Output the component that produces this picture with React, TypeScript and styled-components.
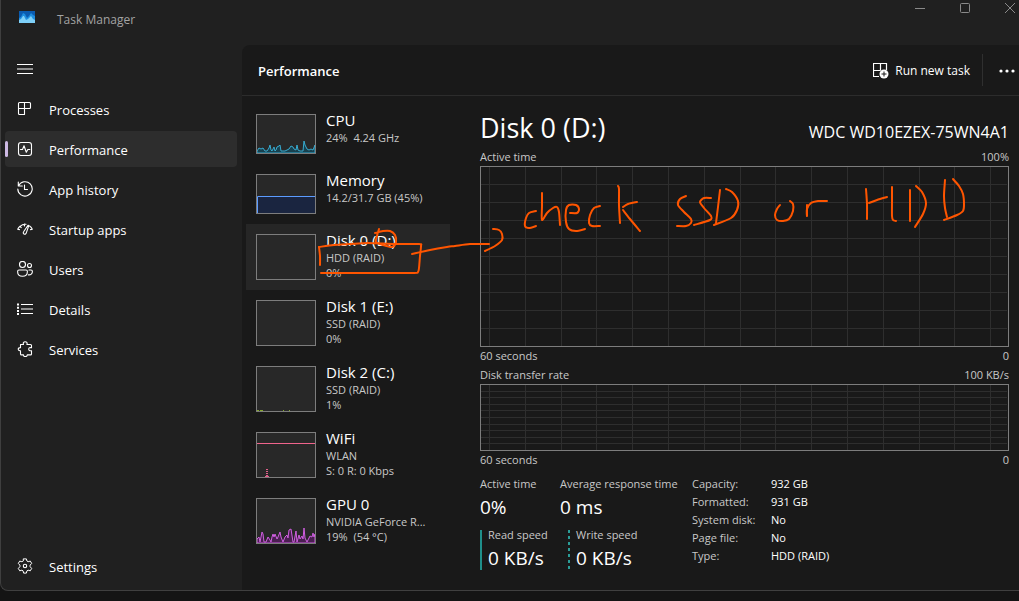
import React from "react";
import styled, { createGlobalStyle } from "styled-components";

const GlobalStyle = createGlobalStyle`
  * { box-sizing: border-box; }
  html, body { margin: 0; background: #141414; }
  body {
    font-family: "Open Sans", "Noto Sans", sans-serif;
    font-size: 11px;
    line-height: 16px;
    color: #fff;
    overflow-x: hidden;
  }
  button { font: inherit; color: inherit; background: none; border: 0; padding: 0; margin: 0; }
  a { color: inherit; text-decoration: none; }
  h1, h2, h3, p, ul { margin: 0; padding: 0; font-weight: 400; }
  ul { list-style: none; }
  svg { display: block; flex: none; }
`;

const Page = styled.div`
  min-height: 100vh;
  padding-bottom: 10px;
  display: flex;
  flex-direction: column;
`;

const Window = styled.div`
  position: relative;
  flex: 1;
  display: flex;
  flex-direction: column;
  background: #202020;
  border-left: 1px solid #3f3f3f;
  border-bottom: 1px solid #3f3f3f;
  border-bottom-left-radius: 8px;
  overflow: hidden;
`;

const TitleBar = styled.header`
  height: 45px;
  display: flex;
  align-items: flex-start;
  padding: 0 4px 0 18px;
`;

const AppIcon = styled.div`
  padding-top: 11px;
  width: 38px;
`;

const AppTitle = styled.h1`
  flex: 1;
  padding-top: 12px;
  font-size: 12px;
  line-height: 16px;
  color: #a3a3a3;
`;

const WindowControls = styled.div`
  display: flex;
  gap: 35px;
  padding-top: 3px;
  color: #8a8a8a;
`;

const Columns = styled.div`
  flex: 1;
  display: flex;
`;

const Sidebar = styled.nav`
  width: 241px;
  flex: none;
  display: flex;
  flex-direction: column;
  gap: 4px;
  padding: 6px 5px 6px 4px;
`;

const MenuButton = styled.button`
  width: 40px;
  height: 36px;
  padding-left: 12px;
`;

const NavLink = styled.a<{ $active?: boolean; $last?: boolean }>`
  position: relative;
  display: flex;
  align-items: center;
  gap: 16px;
  height: 36px;
  padding: 0 12px;
  margin-top: ${(p) => (p.$last ? "auto" : "0")};
  border-radius: 4px;
  background: ${(p) => (p.$active ? "#2d2d2d" : "transparent")};
  &::before {
    content: "";
    display: ${(p) => (p.$active ? "block" : "none")};
    position: absolute;
    left: 0;
    top: 10px;
    width: 3px;
    height: 16px;
    border-radius: 2px;
    background: #cdb9e3;
  }
`;

const NavLabel = styled.span`
  padding-top: 2px;
  font-size: 13px;
  line-height: 20px;
`;

const Main = styled.main`
  flex: 1;
  min-width: 0;
  display: flex;
  flex-direction: column;
  background: #191919;
  border-top-left-radius: 8px;
`;

const Toolbar = styled.div`
  height: 51px;
  display: flex;
  align-items: center;
  padding-left: 16px;
  border-bottom: 1px solid #2c2c2c;
`;

const ToolbarTitle = styled.h2`
  flex: 1;
  padding-top: 2px;
  font-size: 13px;
  line-height: 20px;
  font-weight: 600;
`;

const TaskButton = styled.button`
  display: flex;
  align-items: center;
  gap: 6px;
  padding: 2px 12px 0 0;
  font-size: 12px;
`;

const MoreButton = styled.button`
  height: 32px;
  width: 37px;
  padding: 2px 0 0 16px;
  border-left: 1px solid #2f2f2f;
`;

const Body = styled.div`
  flex: 1;
  display: flex;
`;

const DeviceList = styled.ul`
  width: 208px;
  flex: none;
  padding: 8px 0 0 4px;
`;

const DeviceButton = styled.button<{ $active?: boolean }>`
  width: 100%;
  display: flex;
  gap: 10px;
  text-align: left;
  padding: 0 10px;
  background: ${(p) => (p.$active ? "#262626" : "transparent")};
`;

const Thumb = styled.svg`
  margin: 10px 0;
  background: #282828;
  border: 1px solid #7d7d7d;
`;

const DeviceText = styled.div`
  padding-top: 7px;
  white-space: pre;
`;

const DeviceName = styled.div`
  font-size: 15px;
  line-height: 19px;
`;

const DeviceLine = styled.div`
  line-height: 15px;
  color: #c8c8c8;
`;

const Detail = styled.section`
  flex: 1;
  min-width: 0;
  padding: 12px 10px 0 30px;
`;

const Split = styled.div`
  display: flex;
  justify-content: space-between;
  align-items: baseline;
  color: #c8c8c8;
`;

const DetailHead = styled(Split)`
  color: #fff;
  padding-bottom: 1px;
`;

const DetailTitle = styled.h2`
  font-size: 27px;
  line-height: 40px;
`;

const Model = styled.p`
  font-size: 16px;
  line-height: 20px;
`;

const Chart = styled.svg`
  width: 100%;
  background: #191919;
  border: 1px solid #7d7d7d;
  margin: 1px 0;
`;

const TransferLabel = styled(Split)`
  padding-top: 3px;
`;

const Stats = styled.div`
  display: flex;
  gap: 12px;
  padding-top: 7px;
`;

const Readings = styled.div`
  display: grid;
  grid-template-columns: 80px 120px;
  align-content: start;
  row-gap: 11px;
`;

const Rates = styled.div`
  grid-column: 1 / -1;
  display: grid;
  grid-template-columns: 88px 112px;
`;

const Reading = styled.div`
  white-space: nowrap;
`;

const ReadingLabel = styled.div`
  color: #c8c8c8;
  line-height: 18px;
`;

const ReadingValue = styled.div`
  font-size: 19px;
  line-height: 24px;
  padding-top: 2px;
`;

const Rate = styled(Reading)<{ $dashed?: boolean }>`
  padding-left: 8px;
  background: ${(p) =>
    p.$dashed
      ? "repeating-linear-gradient(#2a9d98 0 3px, transparent 3px 6px)"
      : "linear-gradient(#1f8f8b, #1f8f8b)"};
  background-size: 2px 100%;
  background-repeat: no-repeat;
  ${ReadingLabel} { line-height: 10px; }
  ${ReadingValue} { padding-top: 6px; }
`;

const Facts = styled.table`
  border-collapse: collapse;
  align-self: flex-start;
  th, td {
    padding: 0;
    height: 18px;
    text-align: left;
    font-weight: 400;
    white-space: nowrap;
  }
  th { width: 79px; color: #c8c8c8; }
`;

const Ink = styled.svg`
  position: absolute;
  top: 0;
  left: 0;
  pointer-events: none;
`;

const Icon = ({ children }: { children: React.ReactNode }) => (
  <svg width="16" height="16" viewBox="0 0 16 16" fill="none" stroke="#fff" strokeWidth="1.1" strokeLinecap="round" strokeLinejoin="round" aria-hidden="true">
    {children}
  </svg>
);

const icons = {
  menu: <path d="M0 3.500h16M0 8h16M0 12.500h16" strokeWidth="1" strokeLinecap="butt" />,
  processes: <path d="M2.5 1.5h10a1 1 0 0 1 1 1v4a1 1 0 0 1-1 1h-11v-5a1 1 0 0 1 1-1zM7.5 1.5v12M1.5 7.5v5a1 1 0 0 0 1 1h5v-6" />,
  performance: (
    <>
      <rect x="1.5" y="1.5" width="13" height="13" rx="2.5" />
      <path d="M3.5 8.5h2L7 4.8l2.3 6.5 1.5-2.8h2" />
    </>
  ),
  history: (
    <>
      <path d="M1.3 1v4h4M1.5 4.8A7.2 7.2 0 1 1 .8 8" />
      <path d="M7.5 4v4.5h3" />
    </>
  ),
  startup: (
    <>
      <path d="M.7 8.2A8 8 0 0 1 3 5.3l1.2 1.4M3 5.3A8 8 0 0 1 9 3.2M12.6 5A8 8 0 0 1 15.3 8.2l-1.8.4M.7 8.2l1.8.4M7.5 3v2" />
      <path d="M11 4.2 6.6 10.8a1.5 1.5 0 1 0 2.6 1.4L11.8 4.6z" />
    </>
  ),
  users: (
    <>
      <circle cx="5.5" cy="3.5" r="3" />
      <circle cx="12.5" cy="4.5" r="2" />
      <path d="M2 9h7a1.4 1.4 0 0 1 1.4 1.4c0 3-2 4.9-4.9 4.9S.6 13.4.6 10.4A1.4 1.4 0 0 1 2 9z" />
      <path d="M12 9h2a1.4 1.4 0 0 1 1.4 1.4c0 2.4-1.6 3.7-4 3.5" />
    </>
  ),
  details: (
    <>
      <path d="M4 3.5h12M4 8h12M4 12.5h12" strokeLinecap="butt" />
      <path d="M1 2.5v11.5" strokeWidth="2" strokeDasharray="2 1.2" strokeLinecap="butt" />
    </>
  ),
  services: (
    <path d="M3.5 3.5h3c-.6-1.4.1-2.8 1.7-2.8s2.3 1.4 1.7 2.8h3.6a1 1 0 0 1 1 1v2.2c-1.7-.3-2.8.2-2.8 1.5s1.1 1.8 2.8 1.5v3.2a1 1 0 0 1-1 1h-3.200c-.1 1.300-.8 1.700-1.900 1.700s-1.900-.4-1.900-1.700h-2a1 1 0 0 1-1-1v-3C1.900 9.700 1.200 9.200 1.200 8.200s.7-1.600 2.300-1.600z" />
  ),
  settings: (
    <>
      <circle cx="8" cy="8" r="1.700" />
      <path d="M6.600.9h2.800l.5 2.100 1.200.7 2.200-.6 1.400 2.300-1.600 1.700v1.600l1.600 1.700-1.400 2.400-2.200-.6-1.200.7-.5 2.200H6.600l-.5-2.200-1.200-.7-2.200.6-1.400-2.400 1.600-1.700V7.100L1.300 5.400l1.400-2.300 2.200.6L6.100 3z" strokeWidth="1" />
    </>
  ),
};

const navItems: { label: string; icon: keyof typeof icons; active?: boolean }[] = [
  { label: "Processes", icon: "processes" },
  { label: "Performance", icon: "performance", active: true },
  { label: "App history", icon: "history" },
  { label: "Startup apps", icon: "startup" },
  { label: "Users", icon: "users" },
  { label: "Details", icon: "details" },
  { label: "Services", icon: "services" },
];

const cpuLine = "0,38 0,36 2,33 4,34 6,33 8,36 10,36 12,33 13,30 14,35 15,36 17,32 18,36 19,35 20,32 22,31 23,30 24,36 26,36 28,36 30,35 32,34 34,31 36,32 37,34 39,35 40,30 41,35 43,36 46,36 47,26 48,30 50,34 52,35 54,34 56,35 58,30 58,38";
const gpuLine = "0,44 0,40 2,38 3,43 5,33 6,35 7,43 9,43 11,38 13,41 14,43 15,38 16,35 17,38 18,35 20,40 21,38 23,33 24,38 26,43 28,38 30,36 31,39 32,31 34,30 36,43 37,43 39,32 40,43 42,36 43,40 45,37 46,40 47,29 48,39 50,43 52,39 53,37 55,38 56,34 57,38 58,35 58,44";

const devices: { name: string; lines: string[]; active?: boolean; graph?: React.ReactNode }[] = [
  {
    name: "CPU",
    lines: ["24%  4.24 GHz"],
    graph: <polygon points={cpuLine} fill="#17414f" stroke="#38abd0" />,
  },
  {
    name: "Memory",
    lines: ["14.2/31.7 GB (45%)"],
    graph: (
      <>
        <rect y="22" width="58" height="16" fill="#1a2540" />
        <path d="M0.5 38V21.500H58" fill="none" stroke="#5b9bff" />
      </>
    ),
  },
  { name: "Disk 0 (D:)", lines: ["HDD (RAID)", "0%"], active: true },
  { name: "Disk 1 (E:)", lines: ["SSD (RAID)", "0%"] },
  {
    name: "Disk 2 (C:)",
    lines: ["SSD (RAID)", "1%"],
    graph: <path d="M0 43.500h2M3 43.500h3M26 43.500h1M32 43.500h1" stroke="#83a52c" />,
  },
  {
    name: "WiFi",
    lines: ["WLAN", "S: 0 R: 0 Kbps"],
    graph: (
      <>
        <path d="M0 10.500h58" stroke="#f0648c" />
        <path d="M10 36v8" stroke="#e0608a" strokeWidth="2" strokeDasharray="1 1" />
        <path d="M8 43.500h4" stroke="#e0608a" />
      </>
    ),
  },
  {
    name: "GPU 0",
    lines: ["NVIDIA GeForce R...", "19%  (54 °C)"],
    graph: <polygon points={gpuLine} fill="#4b1f52" stroke="#cf5fe0" />,
  },
];

const facts = [
  ["Capacity:", "932 GB"],
  ["Formatted:", "931 GB"],
  ["System disk:", "No"],
  ["Page file:", "No"],
  ["Type:", "HDD (RAID)"],
];

const GridChart = ({ height, step, label }: { height: number; step: number; label: string }) => {
  const columns = Array.from({ length: 15 }, (_, i) => Math.round(8 + i * 35.8));
  const rows = Array.from({ length: 9 }, (_, i) => Math.round((i + 1) * step) - 1);
  return (
    <Chart height={height} viewBox={`0 0 527 ${height - 2}`} preserveAspectRatio="none" role="img" aria-label={label}>
      <g stroke="#2e2e2e" strokeWidth="1" shapeRendering="crispEdges">
        {columns.map((x) => (
          <line key={x} x1={x + 0.5} x2={x + 0.5} y1="0" y2={height} vectorEffect="non-scaling-stroke" />
        ))}
        {rows.map((y) => (
          <line key={y} x1="0" x2="526" y1={y + 0.5} y2={y + 0.5} />
        ))}
      </g>
    </Chart>
  );
};

type Point = [number, number];

// Pen strokes of the handwritten note, as the points the pen passed through.
const penStrokes: Point[][] = [
  [[379, 229], [377, 236], [376, 242], [383, 245], [392, 247], [396, 242], [395, 235], [390, 231], [383, 231], [375, 233]],
  [[319, 247], [320, 256], [320, 265]],
  [[319, 247], [334, 245], [350, 244], [368, 243], [395, 244], [419, 244], [421, 246], [420, 256], [419, 268], [418, 272], [414, 273], [380, 273], [321, 273]],
  [[412, 254], [430, 250], [447, 247], [455, 246], [470, 244], [489, 244]],
  [[493, 229], [499, 230], [502, 234], [502, 240], [495, 246], [485, 251]],
  [[536, 211], [529, 213], [526, 218], [525, 226], [529, 228], [536, 226]],
  [[542, 193], [542, 206], [542, 220], [547, 213], [553, 208], [557, 207], [559, 212], [560, 225]],
  [[570, 213], [577, 213], [579, 209], [576, 205], [569, 205], [566, 210], [566, 222], [569, 229], [576, 231], [585, 229]],
  [[600, 206], [594, 208], [590, 215], [589, 223], [592, 226], [600, 226]],
  [[618, 186], [619, 189], [619, 205], [620, 223]],
  [[637, 202], [628, 204], [623, 207]],
  [[623, 210], [630, 219], [640, 231]],
  [[686, 196], [680, 199], [678, 205], [684, 212], [691, 219], [691, 223], [686, 226], [677, 226]],
  [[711, 198], [704, 198], [700, 202], [704, 208], [711, 216], [710, 220], [694, 225]],
  [[720, 190], [718, 207], [716, 223]],
  [[726, 189], [732, 192], [738, 201], [737, 210], [731, 218], [714, 225]],
  [[780, 205], [777, 209], [775, 215], [777, 220], [783, 221], [789, 219], [793, 211], [793, 204], [790, 201]],
  [[807, 205], [807, 216], [807, 209], [811, 203], [818, 201], [827, 201]],
  [[866, 189], [867, 204], [867, 219]],
  [[869, 203], [877, 200], [887, 197]],
  [[892, 187], [892, 202], [892, 216], [893, 220], [896, 221]],
  [[910, 190], [910, 205], [910, 221]],
  [[916, 186], [922, 192], [926, 203], [923, 214], [915, 227]],
  [[945, 180], [944, 196], [945, 208], [947, 217]],
  [[953, 179], [959, 186], [963, 194], [964, 205], [963, 211], [957, 215], [944, 220]],
];

// Joins the points with cubic segments that pass through each of them.
const smooth = (points: Point[]) =>
  points.slice(1).reduce((path, p2, i) => {
    const p1 = points[i];
    const p0 = points[i - 1] ?? p1;
    const p3 = points[i + 2] ?? p2;
    const c1 = [p1[0] + (p2[0] - p0[0]) / 7, p1[1] + (p2[1] - p0[1]) / 7];
    const c2 = [p2[0] - (p3[0] - p1[0]) / 7, p2[1] - (p3[1] - p1[1]) / 7];
    return `${path}C${c1} ${c2} ${p2}`;
  }, `M${points[0]}`);

export default function App() {
  return (
    <>
      <GlobalStyle />
      <Page>
        <Window>
          <TitleBar>
            <AppIcon>
              <svg width="16" height="12" viewBox="0 0 16 12" aria-hidden="true">
                <rect width="16" height="12" fill="#0a5bb0" />
                <path d="M0 7L2 6l2-4 2 1 2 4 2-2 2-3 2 2 2 1v7H0z" fill="#1f8fe0" />
                <path d="M0 9l2-1 2-3 1 0 2 4 2-1 3-3 2 3 2 1v3H0z" fill="#7ed0f8" />
              </svg>
            </AppIcon>
            <AppTitle>Task Manager</AppTitle>
            <WindowControls>
              <button aria-label="Minimize">
                <svg width="10" height="10" viewBox="0 0 10 10" stroke="currentColor"><path d="M0 5.500h10" /></svg>
              </button>
              <button aria-label="Maximize">
                <svg width="10" height="10" viewBox="0 0 10 10" fill="none" stroke="currentColor"><rect x=".5" y=".5" width="9" height="9" rx="1" /></svg>
              </button>
              <button aria-label="Close">
                <svg width="10" height="10" viewBox="0 0 10 10" stroke="currentColor"><path d="M0 0l10 10M10 0L0 10" /></svg>
              </button>
            </WindowControls>
          </TitleBar>
          <Columns>
            <Sidebar>
              <MenuButton aria-label="Open navigation"><Icon>{icons.menu}</Icon></MenuButton>
              {navItems.map((item) => (
                <NavLink key={item.label} href="#" $active={item.active}>
                  <Icon>{icons[item.icon]}</Icon>
                  <NavLabel>{item.label}</NavLabel>
                </NavLink>
              ))}
              <NavLink href="#" $last>
                <Icon>{icons.settings}</Icon>
                <NavLabel>Settings</NavLabel>
              </NavLink>
            </Sidebar>
            <Main>
              <Toolbar>
                <ToolbarTitle>Performance</ToolbarTitle>
                <TaskButton>
                  <svg width="16" height="16" viewBox="0 0 16 16" fill="none" stroke="#fff" aria-hidden="true">
                    <path d="M6 13.500H.5V.5h13V7M.5 7.500h7M7.500.5v7" strokeWidth="1.200" />
                    <circle cx="11" cy="11" r="4.500" fill="#fff" stroke="none" />
                    <path d="M11 8.500v5M8.500 11h5" stroke="#191919" />
                  </svg>
                  Run new task
                </TaskButton>
                <MoreButton aria-label="More options">
                  <svg width="18" height="4" viewBox="0 0 18 4" fill="#fff"><circle cx="2" cy="2" r="1.600" /><circle cx="8" cy="2" r="1.600" /><circle cx="14" cy="2" r="1.600" /></svg>
                </MoreButton>
              </Toolbar>
              <Body>
                <DeviceList>
                  {devices.map((d) => {
                    const height = d.lines.length > 1 ? 46 : 40;
                    return (
                      <li key={d.name}>
                        <DeviceButton $active={d.active}>
                          <Thumb width="60" height={height} viewBox={`0 0 58 ${height - 2}`} aria-hidden="true">{d.graph}</Thumb>
                          <DeviceText>
                            <DeviceName>{d.name}</DeviceName>
                            {d.lines.map((line) => <DeviceLine key={line}>{line}</DeviceLine>)}
                          </DeviceText>
                        </DeviceButton>
                      </li>
                    );
                  })}
                </DeviceList>
                <Detail>
                  <DetailHead>
                    <DetailTitle>Disk 0 (D:)</DetailTitle>
                    <Model>WDC WD10EZEX-75WN4A1</Model>
                  </DetailHead>
                  <Split><span>Active time</span><span>100%</span></Split>
                  <GridChart height={181} step={18} label="Active time" />
                  <Split><span>60 seconds</span><span>0</span></Split>
                  <TransferLabel><span>Disk transfer rate</span><span>100 KB/s</span></TransferLabel>
                  <GridChart height={67} step={6.6} label="Disk transfer rate" />
                  <Split><span>60 seconds</span><span>0</span></Split>
                  <Stats>
                    <Readings>
                      <Reading><ReadingLabel>Active time</ReadingLabel><ReadingValue>0%</ReadingValue></Reading>
                      <Reading><ReadingLabel>Average response time</ReadingLabel><ReadingValue>0 ms</ReadingValue></Reading>
                      <Rates>
                        <Rate><ReadingLabel>Read speed</ReadingLabel><ReadingValue>0 KB/s</ReadingValue></Rate>
                        <Rate $dashed><ReadingLabel>Write speed</ReadingLabel><ReadingValue>0 KB/s</ReadingValue></Rate>
                      </Rates>
                    </Readings>
                    <Facts>
                      <tbody>
                        {facts.map(([k, v]) => (
                          <tr key={k}><th scope="row">{k}</th><td>{v}</td></tr>
                        ))}
                      </tbody>
                    </Facts>
                  </Stats>
                </Detail>
              </Body>
            </Main>
          </Columns>
          <Ink width="1018" height="300" viewBox="1 0 1018 300" fill="none" stroke="#ff5500" strokeWidth="2" strokeLinecap="round" strokeLinejoin="round" aria-hidden="true">
            {penStrokes.map((points, i) => <path key={i} d={smooth(points)} />)}
          </Ink>
        </Window>
      </Page>
    </>
  );
}
